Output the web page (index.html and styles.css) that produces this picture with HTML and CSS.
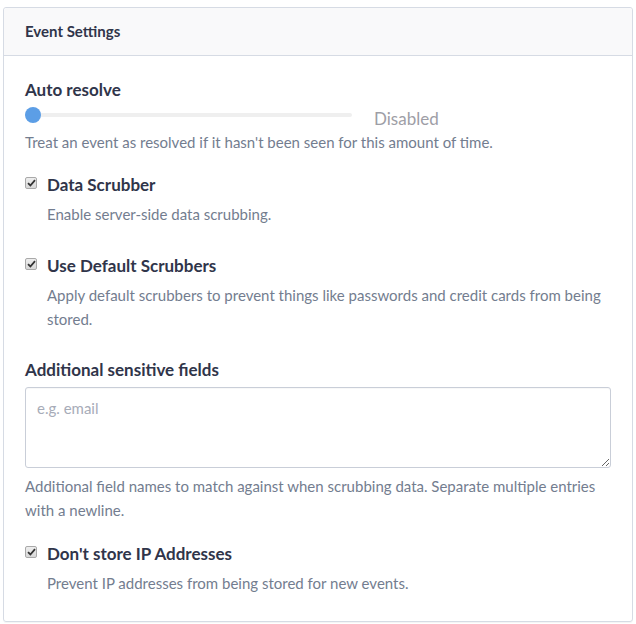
FILE: index.html
```html
<!DOCTYPE html>
<html>
<head>
<meta charset="utf-8">
<link rel="stylesheet" href="styles.css">
</head>
<body>
<div class="panel">
  <div class="panel-header">Event Settings</div>
  <div class="panel-body">
    <div class="field">
      <div class="label">Auto resolve</div>
      <div class="slider-row">
        <div class="slider"><div class="track"></div><div class="thumb"></div></div>
        <div class="slider-value">Disabled</div>
      </div>
      <div class="help">Treat an event as resolved if it hasn't been seen for this amount of time.</div>
    </div>

    <div class="check-field first">
      <div class="check-row">
        <span class="checkbox"><svg width="9" height="8" viewBox="0 0 9 8"><path d="M1 4.2 L3.4 6.5 L8 1.2" fill="none" stroke="#333" stroke-width="1.8"/></svg></span>
        <span class="check-label">Data Scrubber</span>
      </div>
      <div class="help indent">Enable server-side data scrubbing.</div>
    </div>

    <div class="check-field">
      <div class="check-row">
        <span class="checkbox"><svg width="9" height="8" viewBox="0 0 9 8"><path d="M1 4.2 L3.4 6.5 L8 1.2" fill="none" stroke="#333" stroke-width="1.8"/></svg></span>
        <span class="check-label">Use Default Scrubbers</span>
      </div>
      <div class="help indent">Apply default scrubbers to prevent things like passwords and credit cards from being stored.</div>
    </div>

    <div class="field textarea-field">
      <div class="label">Additional sensitive fields</div>
      <textarea class="textarea" placeholder="e.g. email"></textarea>
      <div class="help">Additional field names to match against when scrubbing data. Separate multiple entries with a newline.</div>
    </div>

    <div class="check-field last">
      <div class="check-row">
        <span class="checkbox"><svg width="9" height="8" viewBox="0 0 9 8"><path d="M1 4.2 L3.4 6.5 L8 1.2" fill="none" stroke="#333" stroke-width="1.8"/></svg></span>
        <span class="check-label">Don't store IP Addresses</span>
      </div>
      <div class="help indent">Prevent IP addresses from being stored for new events.</div>
    </div>
  </div>
</div>
</body>
</html>
```

FILE: styles.css
```css
* { box-sizing: border-box; }
html, body { margin: 0; padding: 0; background: #fff; }
body { font-family: Lato, "Open Sans", sans-serif; color: #353a4b; }

.panel {
  margin: 7px 3px 3px 3px;
  border: 1px solid #d6dbe4;
  border-radius: 3px;
  box-shadow: 0 1px 0 rgba(0,0,0,0.04);
}
.panel-header {
  height: 48px;
  background: #f9f9fa;
  border-bottom: 1px solid #d6dbe4;
  padding: 0 21px;
  font-size: 15px;
  font-weight: 700;
  line-height: 47px;
  color: #30354a;
  border-radius: 3px 3px 0 0;
}
.panel-body {
  padding: 23px 21px 26px 21px;
}
.label {
  font-size: 17px;
  font-weight: 700;
  line-height: 22px;
  color: #30354a;
}
.slider-row {
  display: flex;
  align-items: center;
  height: 24px;
  margin-top: 2px;
}
.slider {
  position: relative;
  width: 327px;
  height: 16px;
}
.track {
  position: absolute;
  left: 0; right: 0; top: 6px;
  height: 4px;
  background: #efefef;
  border-radius: 2px;
}
.thumb {
  position: absolute;
  left: 0; top: 0;
  width: 16px; height: 16px;
  border-radius: 50%;
  background: #5c9ee6;
}
.slider-value {
  margin-left: 22px;
  margin-top: 6px;
  font-size: 17px;
  color: #9e9ea6;
}
.help {
  font-size: 15px;
  line-height: 24px;
  color: #737d8f;
}
.field .help { margin-top: 3px; }
.indent { padding-left: 22px; }

.check-field { margin-top: 27px; }
.check-field.first { margin-top: 18px; }
.check-row {
  display: flex;
  align-items: center;
  height: 24px;
}
.checkbox {
  width: 12px;
  height: 12px;
  border: 1px solid #a9a9a9;
  border-radius: 2px;
  background: linear-gradient(#eee, #d8d8d8);
  display: flex;
  align-items: center;
  justify-content: center;
  margin-right: 10px;
  margin-top: -3px;
}
.check-label {
  font-size: 17px;
  font-weight: 700;
  color: #30354a;
}
.check-field .help { margin-top: 6px; }

.textarea-field { margin-top: 28px; }
.textarea {
  display: block;
  width: 100%;
  height: 81px;
  margin-top: 6px;
  border: 1px solid #c9ced8;
  border-radius: 3px;
  padding: 11px 11px;
  font-family: Lato, sans-serif;
  font-size: 15px;
  color: #30354a;
  resize: vertical;
  box-shadow: inset 0 1px 1px rgba(0,0,0,0.03);
}
.textarea::placeholder { color: #a7acb8; }
.textarea-field .help { margin-top: 6px; }
.check-field.last { margin-top: 19px; }
```
